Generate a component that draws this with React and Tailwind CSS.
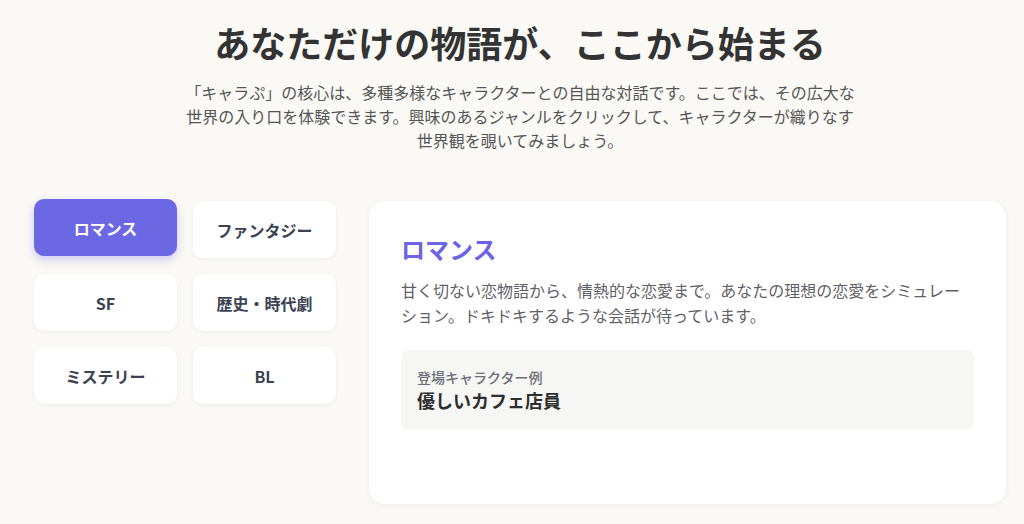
import React, { useState } from 'react';

const genres = [
  {
    id: 'romance',
    label: 'ロマンス',
    desc: '甘く切ない恋物語から、情熱的な恋愛まで。あなたの理想の恋愛をシミュレーション。ドキドキするような会話が待っています。',
    example: '優しいカフェ店員',
  },
  { id: 'fantasy', label: 'ファンタジー', desc: '剣と魔法の世界で、仲間たちと冒険の旅へ。', example: '旅の魔法使い' },
  { id: 'sf', label: 'SF', desc: '遥かな未来、宇宙の彼方で出会う物語。', example: '宇宙船のAI' },
  { id: 'history', label: '歴史・時代劇', desc: '時代を駆け抜けた人々と語り合う。', example: '若き侍' },
  { id: 'mystery', label: 'ミステリー', desc: '謎を解き明かす緊張感あふれる対話。', example: '名探偵' },
  { id: 'bl', label: 'BL', desc: '繊細な心の機微を描く物語。', example: '同級生の先輩' },
];

export default function App() {
  const [active, setActive] = useState('romance');
  const current = genres.find((g) => g.id === active);

  return (
    <div
      className="min-h-screen bg-[#faf9f5] text-[#333] pl-4"
      style={{ fontFamily: '"Noto Sans CJK JP", "Noto Sans", sans-serif' }}
    >
      {/* ヘッダー */}
      <div className="pt-[22px] flex flex-col items-center text-center">
        <h1 className="text-[36px] leading-10 font-bold text-[#333]">あなただけの物語が、ここから始まる</h1>
        <p className="mt-[18px] max-w-2xl text-base leading-6 text-[#555]">
          「キャラぷ」の核心は、多種多様なキャラクターとの自由な対話です。ここでは、その広大な世界の入り口を体験できます。興味のあるジャンルをクリックして、キャラクターが織りなす世界観を覗いてみましょう。
        </p>
      </div>

      <div className="mt-[49px] mx-auto w-[972px] flex gap-[33px]">
        {/* ジャンル一覧 */}
        <div className="w-[302px] grid grid-cols-2 gap-4 self-start">
          {genres.map((g) => {
            const isActive = g.id === active;
            return (
              <button
                key={g.id}
                onClick={() => setActive(g.id)}
                className={`h-[57px] rounded-[10px] text-base font-bold transition-all ${
                  isActive
                    ? 'bg-[#6c67e3] text-white shadow-[0_4px_10px_rgba(108,103,227,0.3)] -translate-y-[2px]'
                    : 'bg-white text-[#3b4252] shadow-[0_1px_4px_rgba(0,0,0,0.06)]'
                }`}
              >
                {g.label}
              </button>
            );
          })}
        </div>

        {/* 詳細カード */}
        <div className="w-[637px] h-[303px] bg-white rounded-2xl shadow-[0_1px_6px_rgba(0,0,0,0.06)] px-8 pt-[32px]">
          <h2 className="text-2xl leading-8 font-bold text-[#6b64e4]">{current.label}</h2>
          <p className="mt-[13px] text-base leading-[25px] text-[#5f6168]">{current.desc}</p>
          <div className="mt-[22px] bg-[#f6f6f4] rounded-lg px-4 pt-[17px] pb-[17px]">
            <p className="text-sm leading-5 font-medium text-[#6b6e76]">登場キャラクター例</p>
            <p className="text-lg leading-[26px] font-bold text-[#2e2e2e]">{current.example}</p>
          </div>
        </div>
      </div>
    </div>
  );
}
